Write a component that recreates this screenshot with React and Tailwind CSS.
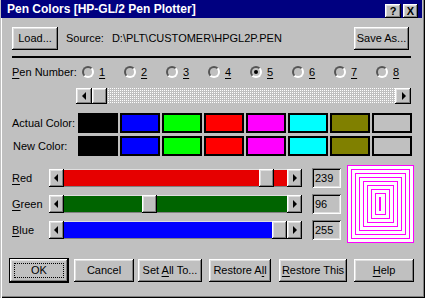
import React from 'react';

const raised = 'bg-[#c0c0c0] shadow-[inset_-1px_-1px_#000,inset_1px_1px_#fff,inset_-2px_-2px_#808080,inset_2px_2px_#dfdfdf]';
const sunken = 'bg-[#c0c0c0] shadow-[inset_1px_1px_#808080,inset_-1px_-1px_#fff,inset_2px_2px_#000,inset_-2px_-2px_#dfdfdf]';

const SWATCHES = ['#000000', '#0000ff', '#00ff00', '#ff0000', '#ff00ff', '#00ffff', '#808000', '#c0c0c0'];

function Arrow({ dir, className = 'w-[15px]' }) {
  return (
    <div className={`${raised} ${className} h-full flex items-center justify-center shrink-0`}>
      {dir === 'left' ? (
        <div className="w-0 h-0 border-y-[4px] border-y-transparent border-r-[4px] border-r-black mr-[1px]" />
      ) : (
        <div className="w-0 h-0 border-y-[4px] border-y-transparent border-l-[4px] border-l-black ml-[1px]" />
      )}
    </div>
  );
}

function Btn({ className = '', children }) {
  return <div className={`${raised} h-[23px] flex items-center justify-center shrink-0 ${className}`}>{children}</div>;
}

function Radio({ n, checked }) {
  return (
    <div className="w-[42px] flex items-center shrink-0">
      <div className="w-[12px] h-[12px] rounded-full border-2 border-t-[#555] border-l-[#555] border-b-white border-r-white bg-[#c0c0c0] flex items-center justify-center">
        {checked && <div className="w-[4px] h-[4px] rounded-full bg-black" />}
      </div>
      <span className="ml-[5px] leading-none">
        <u className="underline-offset-[2px]">{n}</u>
      </span>
    </div>
  );
}

function Slider({ letter, rest, value, track }) {
  const pos = Math.round((value / 255) * 208);
  return (
    <div className="flex items-center h-[20px]">
      <div className="w-[49px] pl-[12px] shrink-0">
        <u className="underline-offset-[2px]">{letter}</u>{rest}
      </div>
      <div className="flex h-[18px] w-[253px] shrink-0">
        <Arrow dir="left" />
        <div className={`relative flex-1 border-t border-t-[#dfdfdf] border-b border-b-[#808080] ${track}`}>
          <div className={`absolute top-[-1px] bottom-[-1px] w-[15px] ${raised}`} style={{ left: pos }} />
        </div>
        <Arrow dir="right" />
      </div>
      <div className={`ml-[10px] w-[29px] h-[20px] ${sunken} flex items-center pl-[3px] shrink-0`}>{value}</div>
    </div>
  );
}

function Preview() {
  const rects = [0, 1, 2, 3, 4, 5, 6, 7];
  return (
    <svg width="67" height="78" className="bg-white block shrink-0" shapeRendering="crispEdges">
      {rects.map(i => (
        <rect key={i} x={i * 4 + 0.5} y={i * 4 + 0.5} width={66 - i * 8} height={77 - i * 8} fill="none" stroke="#ff00ff" strokeWidth="1" />
      ))}
      <rect x="32" y="32" width="2" height="14" fill="#ff00ff" />
    </svg>
  );
}

export default function App() {
  return (
    <div className="w-[425px] h-[298px] bg-[#c0c0c0] flex flex-col text-[11px] text-black font-['Liberation_Sans',Arial,sans-serif] shadow-[inset_1px_0_#c0c0c0,inset_2px_0_#fff,inset_-1px_-1px_#000,inset_-2px_-2px_#808080] overflow-hidden select-none">
      {/* Title bar */}
      <div className="h-[18px] ml-[1px] mr-[3px] bg-[#000080] flex items-center pl-[6px] pr-[4px] shrink-0">
        <span className="text-white font-bold text-[12px] leading-none">Pen Colors [HP-GL/2 Pen Plotter]</span>
        <div className="ml-auto flex gap-[2px] mt-[4px]">
          <div className={`${raised} w-[16px] h-[14px] flex items-center justify-center font-bold text-[11px] leading-none`}>?</div>
          <div className={`${raised} w-[15px] h-[14px] flex items-center justify-center font-bold text-[11px] leading-none`}>X</div>
        </div>
      </div>

      {/* Load / Source / Save As */}
      <div className="mt-[9px] h-[22px] flex items-center shrink-0">
        <Btn className="ml-[12px] w-[46px] h-[22px]">Load...</Btn>
        <span className="ml-[8px]">Source:</span>
        <span className="ml-[8px]">D:\PLT\CUSTOMER\HPGL2P.PEN</span>
        <Btn className="ml-auto mr-[16px] w-[55px] h-[22px]">Save As...</Btn>
      </div>

      <div className="mt-[7px] h-[2px] ml-[12px] mr-[14px] bg-black shrink-0" />

      {/* Pen number */}
      <div className="mt-[5px] h-[18px] flex items-center shrink-0">
        <div className="w-[82px] pl-[12px] shrink-0">
          <u className="underline-offset-[2px]">P</u>en Number:
        </div>
        {[1, 2, 3, 4, 5, 6, 7, 8].map(n => (
          <Radio key={n} n={n} checked={n === 5} />
        ))}
      </div>

      {/* Pen scrollbar */}
      <div className="mt-[7px] h-[16px] ml-[76px] w-[335px] flex shrink-0">
        <Arrow dir="left" className="w-[16px]" />
        <div className={`${raised} w-[15px] h-full shrink-0`} />
        <div className="flex-1 bg-[linear-gradient(transparent_1px,#c0c0c0_1px),linear-gradient(90deg,#c0c0c0_1px,#fff_1px)] bg-[length:2px_2px]" />
        <Arrow dir="right" className="w-[16px]" />
      </div>

      {/* Colour rows */}
      <div className="mt-[9px] flex flex-col gap-[3px] shrink-0">
        {['Actual Color:', 'New Color:'].map((label, r) => (
          <div key={label} className="flex items-center h-[20px]">
            <div className={`w-[78px] shrink-0 ${r ? 'pl-[13px]' : 'pl-[12px]'}`}>{label}</div>
            <div className="flex gap-[2px]">
              {SWATCHES.map(c => (
                <div key={c} className="w-[40px] h-[20px] border-2 border-black" style={{ backgroundColor: c }} />
              ))}
            </div>
          </div>
        ))}
      </div>

      {/* Sliders + preview */}
      <div className="mt-[9px] flex items-start shrink-0">
        <div className="pt-[3px] flex flex-col gap-[6px]">
          <Slider letter="R" rest="ed" value={239} track="bg-[#e60000]" />
          <Slider letter="G" rest="reen" value={96} track="bg-[#006400]" />
          <Slider letter="B" rest="lue" value={255} track="bg-[#0000ff]" />
        </div>
        <div className="ml-[6px]">
          <Preview />
        </div>
      </div>

      {/* Buttons */}
      <div className="mt-[16px] flex items-center shrink-0">
        <div className="ml-[10px] w-[58px] h-[23px] outline outline-1 outline-black flex shrink-0">
          <div className={`${raised} flex-1 flex p-[4px]`}>
            <div className="flex-1 border border-dotted border-black flex items-center justify-center">OK</div>
          </div>
        </div>
        <Btn className="ml-[6px] w-[60px]">Cancel</Btn>
        <Btn className="ml-[4px] w-[64px]">
          <span>
            Set <u className="underline-offset-[2px]">A</u>ll To...
          </span>
        </Btn>
        <Btn className="ml-[7px] w-[62px]">
          <span>
            Restore A<u className="underline-offset-[2px]">l</u>l
          </span>
        </Btn>
        <Btn className="ml-[8px] w-[68px]">
          <span>
            <u className="underline-offset-[2px]">R</u>estore This
          </span>
        </Btn>
        <Btn className="ml-[7px] w-[60px]">
          <span>
            <u className="underline-offset-[2px]">H</u>elp
          </span>
        </Btn>
      </div>
    </div>
  );
}
